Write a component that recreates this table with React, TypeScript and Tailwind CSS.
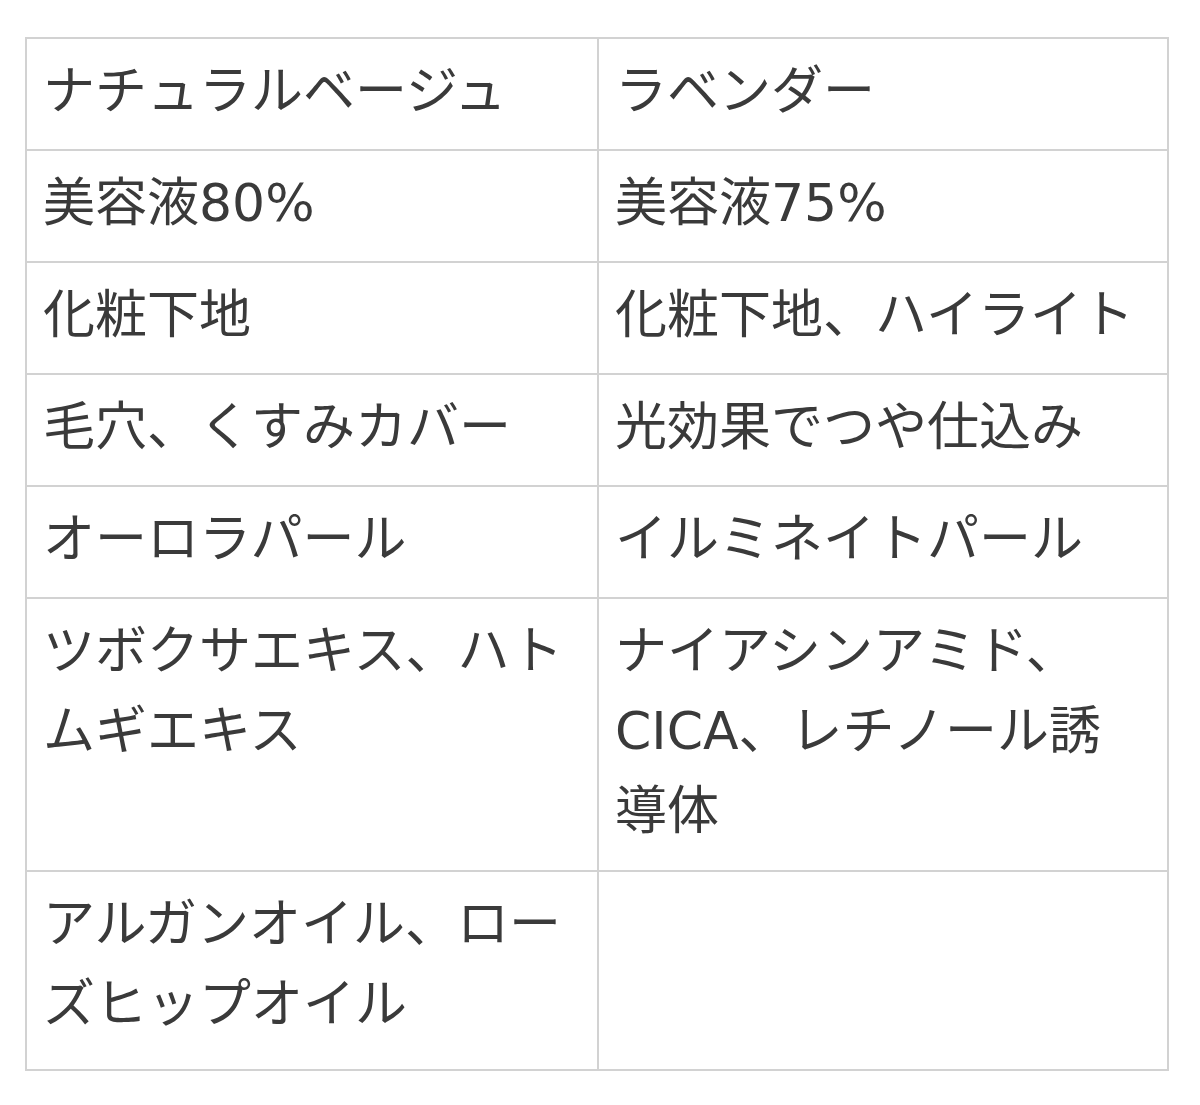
import React from "react";

const rows: [string, string, number][] = [
  ["ナチュラルベージュ", "ラベンダー", 112],
  ["美容液80%", "美容液75%", 112],
  ["化粧下地", "化粧下地、ハイライト", 112],
  ["毛穴、くすみカバー", "光効果でつや仕込み", 112],
  ["オーロラパール", "イルミネイトパール", 112],
  ["ツボクサエキス、ハトムギエキス", "ナイアシンアミド、CICA、レチノール誘導体", 273],
  ["アルガンオイル、ローズヒップオイル", "", 199],
];

export default function App() {
  return (
    <div
      className="w-[1200px] h-[1105px] bg-white pl-[25px] pt-[37px]"
      style={{ fontFamily: '"DejaVu Sans", "Noto Sans CJK JP", sans-serif' }}
    >
      <table className="table-fixed border-collapse w-[1142px] text-[#3a3a3a] text-[52px] leading-[80px]">
        <colgroup>
          <col className="w-[572px]" />
          <col className="w-[570px]" />
        </colgroup>
        <tbody>
          {rows.map(([a, b, h], i) => (
            <tr key={i} style={{ height: h }}>
              <td className="border-2 border-[#d2d2d2] pl-[16px] pr-[24px] pt-[12px] pb-[18px] align-top">
                {a}
              </td>
              <td className="border-2 border-[#d2d2d2] pl-[16px] pr-[24px] pt-[12px] pb-[18px] align-top">
                {b}
              </td>
            </tr>
          ))}
        </tbody>
      </table>
    </div>
  );
}
